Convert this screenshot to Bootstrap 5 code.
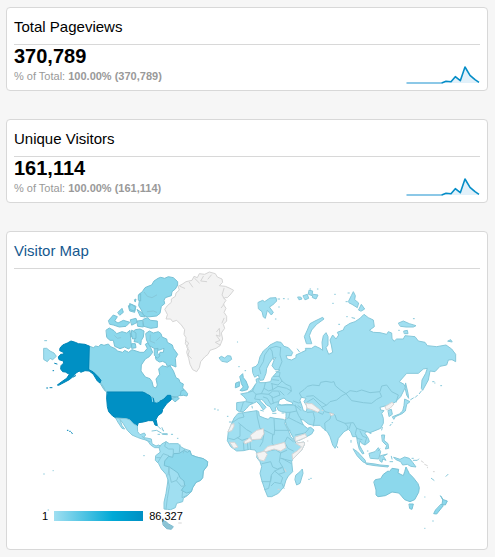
<!DOCTYPE html>
<html lang="en">
<head>
<meta charset="utf-8">
<meta name="viewport" content="width=device-width, initial-scale=1">
<title>Visitor dashboard</title>
<link href="https://cdn.jsdelivr.net/npm/bootstrap@5.3.0/dist/css/bootstrap.min.css" rel="stylesheet">
<style>
  body { background: #f6f6f6; color: #000; font-family: "Liberation Sans", Arial, sans-serif; }
  .board { display: grid; gap: 28px; padding: 7px 7px 7px 6px; }
  .widget { border: 1px solid #d8d8d8; border-radius: 4px; padding: 0 7px 5px; }
  .widget-title { font-size: 15px; line-height: 20px; font-weight: 400; padding: 9px 0 7px; margin: 0; border-bottom: 1px solid #d8d8d8; }
  .widget-title a { color: #15598f; text-decoration: none; }
  .metric { font-size: 20px; line-height: 23px; font-weight: 700; }
  .share { font-size: 11px; line-height: 16px; color: #999; padding-bottom: 1px; }
  .spark { width: 74px; height: 20px; margin-bottom: 1px; }
  .world { display: block; width: 100%; height: auto; }
  .widget-map { padding-bottom: 9px; }
  .legend { left: 28px; bottom: 18px; gap: 6px; font-size: 11px; line-height: 12px; }
  .scale { width: 89px; height: 10px; background: linear-gradient(90deg, #a0dff1, #00a9d6 66%, #0090c4); }
  .world { stroke-width: 3; stroke-linejoin: round; stroke-linecap: round; }
  .low { fill: #a0dff1; stroke: #86c8da; }
  .mid { fill: #8cd8ec; stroke: #78c1d5; }
  .high { fill: #0090c4; stroke: #0085b7; }
  .none { fill: #f3f3f3; stroke: #d5d5d5; }
  .sea { fill: #fff; stroke: #86c8da; }
  .edge { fill: none; stroke: #86c8da; stroke-width: 3; }
</style>
<script src="https://cdn.jsdelivr.net/npm/bootstrap@5.3.0/dist/js/bootstrap.bundle.min.js"></script>
</head>
<body>
<main class="board">
  <section class="card widget">
    <h2 class="widget-title">Total Pageviews</h2>
    <div class="d-flex justify-content-between align-items-end">
      <div>
        <div class="metric">370,789</div>
        <div class="share">% of Total: <b>100.00% (370,789)</b></div>
      </div>
      <svg class="spark" viewBox="0 0 74 20" role="img" aria-label="Pageviews trend">
        <path d="M36 19 40 17.3 45 17.7 49.3 12.7 54.3 16.7 59 3 64 11.3 69 15.7 73 18.3V19Z" fill="#e2f1fa"/>
        <path d="M.5 19H36" fill="none" stroke="#66b6df" stroke-width="1.5"/>
        <path d="M35.7 19 40 17.3 45 17.7 49.3 12.7 54.3 16.7 59 3 64 11.3 69 15.7 73 18.3" fill="none" stroke="#058dc7" stroke-width="1.6" stroke-linejoin="round"/>
      </svg>
    </div>
  </section>

  <section class="card widget">
    <h2 class="widget-title">Unique Visitors</h2>
    <div class="d-flex justify-content-between align-items-end">
      <div>
        <div class="metric">161,114</div>
        <div class="share">% of Total: <b>100.00% (161,114)</b></div>
      </div>
      <svg class="spark" viewBox="0 0 74 20" role="img" aria-label="Visitors trend">
        <path d="M36 19 40 17.3 45 17.7 49.3 12.7 54.3 16.7 59 3 64 11.3 69 15.7 73 18.3V19Z" fill="#e2f1fa"/>
        <path d="M.5 19H36" fill="none" stroke="#66b6df" stroke-width="1.5"/>
        <path d="M35.7 19 40 17.3 45 17.7 49.3 12.7 54.3 16.7 59 3 64 11.3 69 15.7 73 18.3" fill="none" stroke="#058dc7" stroke-width="1.6" stroke-linejoin="round"/>
      </svg>
    </div>
  </section>

  <section class="card widget widget-map">
    <h2 class="widget-title"><a href="#map">Visitor Map</a></h2>
    <div class="position-relative" id="map">
      <svg class="world" viewBox="-48 12 1398 813" role="img" aria-label="Visitors by country">
        <!-- Canada and the Arctic islands -->
        <path class="mid" d="M177 243 190 248 197 243 205 245 213 238 222 241 235 237 242 245 256 251 262 258 278 262 284 256 296 262 306 254 318 258 330 262 342 262 352 250 346 238 356 232 362 248 368 262 358 275 346 282 334 300 333 318 346 336 360 341 366 350 370 366 378 369 382 360 378 342 389 328 386 312 396 302 412 306 420 302 430 317 438 338 447 343 450 352 460 357 458 368 463 378 456 388 440 396 424 394 440 397 436 405 428 402 417 391 400 404 385 411 373 416 370 397 352 388 338 382 232 382 222 374 210 354 208 342 198 330 177 318Z"/>
        <path class="mid" d="M454 378 463 374 473 386 471 393 460 391 452 392ZM426 400 440 396 448 400 436 410ZM348 205 358 198 370 204 385 200 393 206 396 216 410 222 412 232 427 240 430 250 443 268 436 280 438 306 424 300 412 304 408 294 398 289 388 291 378 284 376 276 386 276 390 262 400 262 402 250 386 256 372 250 358 242 350 226Z"/>
        <path class="mid" d="M374 252 384 250 382 264 390 272 382 280 374 272ZM327 88 337 80 345 68 354 64 365 60 372 48 384 40 392 37 404 40 415 35 430 38 443 50 443 60 436 72 426 80 424 92 406 98 402 106 404 116 394 124 390 145 380 153 352 156 340 150 334 135 326 122 328 108Z"/>
        <path class="mid" d="M340 163 352 158 362 166 382 168 382 187 362 190 342 184ZM302 205 316 194 330 192 342 198 340 216 334 226 332 240 324 232 312 230 316 218 306 216ZM229 195 238 189 252 197 260 206 276 200 290 204 300 196 302 220 304 244 296 252 284 246 270 251 254 244 250 226 240 226 231 218Z"/>
        <path class="mid" d="M236 166 250 150 262 155 254 168 264 174 280 166 300 172 288 184 268 186 250 180 240 178ZM264 142 276 130 280 142 270 150ZM296 122 306 118 316 128 314 142 300 138ZM302 164 318 160 322 172 306 180ZM306 196 318 204 318 220 308 222 304 208ZM326 90 332 86 332 108 326 106ZM314 104 318 102 316 110ZM322 134 334 142 346 156 332 154ZM322 168 338 166 340 186 324 184ZM300 116 318 124 314 138 300 134ZM306 236 316 236 318 248 306 250Z"/>
        <path class="edge" d="M343 82 352 94 366 98 380 90M352 140 370 138 380 142M361 210 360 228 374 234M390 216 380 226M254 212 262 220 272 218M204 340 214 356 222 368 226 378"/>
        <!-- Alaska, contiguous states, Hawaii -->
        <path class="high" d="M177 243 165 238 145 236 136 232 123 228 112 234 98 240 90 249 89 257 99 261 102 267 92 268 85 276 87 284 100 288 101 294 93 302 92 312 98 320 106 321 118 328 110 340 98 348 82 360 86 361 105 351 118 344 130 334 138 324 148 318 152 322 165 317 178 318 190 328 202 348 210 354 213 346 205 336 190 321 177 314Z"/>
        <path class="high" d="M50 369h3M60 368h6M69 317h2M74 295l7 2M130 336l7-4M112 496h2M119 499h2M124 503l3 2M232 381 338 381 352 387 362 394 370 400 373 415 385 411 402 402 412 391 422 391 424 404 410 416 398 433 396 443 384 452 378 463 382 482 375 480 370 467 355 467 340 471 325 473 322 483 310 476 300 465 290 461 258 459 248 453 236 440 232 425 230 400Z"/>
        <path d="M350 384 360 388 366 396 368 410M368 386 358 384M388 408 380 412M396 402 388 404" fill="none" stroke="#8cd8ec"/>
        <!-- Greenland -->
        <path class="none" d="M405 132 412 122 424 112 424 102 436 94 438 84 448 75 444 64 456 58 468 50 486 46 492 34 502 38 508 26 524 28 538 21 556 26 562 36 576 42 578 52 568 62 586 64 600 70 611 76 600 90 592 98 580 98 588 106 580 118 588 130 582 142 590 154 590 168 580 178 584 190 574 204 578 222 570 242 558 250 540 256 534 268 524 276 512 290 508 308 500 320 488 314 480 298 476 280 470 262 474 248 466 236 468 218 462 208 464 194 454 180 440 166 428 170 422 162 408 162 412 150Z"/>
        <path class="none" d="M450 64 464 70M478 52 488 66M494 40 508 54M520 34 512 48 530 50M544 30 534 42M582 70 576 90 584 102M582 118 574 128M582 160 576 174M560 200 568 190 570 214 558 210 570 226 556 232 570 240M466 226 476 234 470 246 478 258 474 270 484 280" fill="none"/>
        <path class="low" d="M568 278 574 274 584 279 592 272 602 273 605 283 592 292 576 289Z"/>
        <!-- Mexico, Central America and the Caribbean -->
        <path class="low" d="M258 459 290 461 300 465 310 476 322 483 323 500 330 509 343 504 347 510 340 518 350 519 364 522 366 536 378 543 386 540 394 545 388 548 374 548 362 540 352 526 336 522 322 517 306 510 292 496 280 476 270 463 276 482 284 492 276 490 264 472Z"/>
        <path class="edge" d="M336 514 344 520M348 526 360 530M366 498 380 496 394 504M398 506 412 506 412 509 398 508ZM384 484l8 8M396 488l4 10M424 508h4M442 520h2M384 508h5M341 572h2M41 627h2M69 617h1M54 735h2M553 432h3M563 435h2M398 494l3 3" stroke-width="4"/>
        <!-- South America -->
        <path class="low" d="M388 547 395 537 408 530 418 536 445 536 452 545 464 552 480 557 484 570 500 576 520 581 533 590 532 602 520 618 518 638 512 646 498 652 488 668 484 680 474 690 460 700 458 710 440 715 436 728 422 734 412 733 402 732 402 712 408 685 414 645 408 628 394 612 386 596 376 586 377 572 390 562Z"/>
        <path class="mid" d="M405 587 416 574 428 577 430 566 448 565 462 556 472 562 480 557 484 570 500 576 520 581 533 590 532 602 520 618 518 638 512 646 498 652 488 668 484 680 470 684 454 676 464 662 462 648 450 638 444 624 430 614 418 606 404 602Z"/>
        <path class="edge" d="M408 530 404 544 416 552 430 552 430 566M450 540 448 562M464 552 460 564M380 578 392 578 400 566 416 572M392 578 384 592M416 606 418 626 424 652 440 646 444 636M414 645 418 665 412 700 408 732M440 648 454 664 466 662M458 676 456 698 470 692M418 606 414 630"/>
        <path d="M398 766 408 770 416 777 430 785 424 793 410 791 400 781Z" fill="#8cc4d5" stroke="#7dbbd0"/>
        <path class="none" d="M446 774h8"/>
        <!-- Eurasia -->
        <path class="low" d="M668 322 667 308 678 304 685 295 690 275 700 258 712 248 720 240 740 230 753 232 762 244 775 248 788 262 784 272 768 272 772 282 785 285 798 278 798 270 815 262 828 256 826 250 845 250 855 243 870 250 878 256 876 232 880 212 888 203 894 215 894 240 888 248 896 268 908 262 904 240 900 225 908 210 918 222 926 210 922 202 940 195 944 185 960 175 975 170 990 160 1002 148 1015 158 1030 165 1033 185 1018 196 1030 202 1050 203 1070 208 1075 200 1085 204 1086 220 1092 229 1100 222 1120 222 1125 212 1155 215 1165 228 1185 232 1192 242 1220 245 1248 240 1265 252 1277 268 1277 290 1266 284 1255 285 1250 300 1230 304 1215 320 1200 318 1195 345 1178 376 1174 370 1176 345 1187 325 1192 310 1180 312 1165 325 1130 325 1108 350 1122 358 1126 367 1122 375 1112 395 1095 412 1082 418 1065 423 1050 427 1052 435 1062 437 1055 445 1060 460 1060 475 1052 490 1035 497 1020 503 1010 500 1005 505 1015 520 1018 530 1005 540 995 535 990 527 988 540 995 553 1002 565 998 567 988 553 982 530 980 515 968 515 962 500 955 493 942 500 925 520 920 540 915 550 908 540 900 515 892 500 882 493 870 481 850 481 835 477 820 465 812 463 820 480 832 490 842 487 852 495 845 507 830 515 810 525 795 530 790 518 780 500 770 482 766 468 768 455 768 442 755 440 745 436 740 425 736 428 738 437 728 440 720 425 710 420 700 407 694 403 690 407 705 423 708 427 700 435 690 420 680 410 670 415 658 420 650 430 640 440 628 440 620 435 620 413 645 410 650 405 640 393 632 387 652 383 665 375 675 360 680 353 678 343 686 340 688 353 705 353 722 350 726 338 740 322 750 315 735 314 726 302 733 284 738 278 728 280 718 294 710 310 708 325 700 345 690 346 685 330 675 336Z"/>
        <path class="sea" d="M745 415 748 405 762 399 770 406 788 413 787 419 770 418 755 421ZM815 397 828 400 822 410 832 425 829 440 820 437 815 420 810 407Z"/>
        <path class="low" d="M685 112 698 106 704 110 720 99 738 98 740 108 728 120 718 126 730 142 724 150 712 136 706 160 700 156 696 140 686 132ZM829 235 823 215 832 195 840 176 855 168 878 157 882 162 860 178 845 195 838 212 845 235ZM956 108 964 92 970 80 976 92 974 104 986 114 982 128 966 118 958 114ZM986 134 994 118 1004 132 994 138ZM1106 174 1120 168 1138 176 1158 182 1150 186 1128 186 1112 184ZM1122 198 1132 196 1134 206 1124 206ZM1254 228l8-4 4 6zM42 250 50 250 60 258 72 264 79 274 68 284 60 280 52 290 42 284ZM44 227h6"/>
        <path class="low" d="M804 96h8l4 6-8 2zM820 92l12-4 4 12-10 4zM838 76l10 2-2 14-10-4zM850 88l14 2-6 12-10-4zM744 102h5M760 101h3M746 126h2M736 162h2M714 190h1M840 72h2M862 72h2M908 115h2M914 88h2M948 110h4M954 84h4M926 178h3M950 155h2M966 158l8 2M1150 161h3M1106 196h2M622 231h1M626 305h2M645 317h2M802 252l6 8M774 102h1"/>
        <path class="mid" d="M630 334 638 326 640 338 648 348 655 366 652 374 636 378 630 376 640 366 634 356 632 346ZM618 354 628 350 628 364 617 368Z"/>
        <path class="edge" d="M692 326 688 310 700 290 704 270 718 250 738 244 752 248M730 284 726 258 720 250M752 248 750 270 756 290 746 314M738 320 750 322 748 334 730 334M748 334 756 348 744 360 724 356M728 344 746 346M756 348 768 358 782 364 784 378 774 388M706 353 702 370 716 378 728 374 726 356M675 360 668 378 678 388 694 386 702 370M668 378 656 382M648 410 668 414M640 412 632 438M678 388 674 402 690 404M694 386 716 388 728 378 746 378 750 390 730 398 716 388M700 396 712 400 722 418 736 412 746 410M726 396 730 414M750 378 762 390M728 374 744 364 770 370 784 378M742 420 762 420 790 420 804 428 812 436M796 420 800 438 780 442 768 442M800 438 806 452 814 464M780 442 776 458 800 470 820 480M776 458 768 462M790 408 806 414 812 412M804 422 812 428"/>
        <path class="edge" d="M815 397 808 384 822 374 832 364 848 360 868 362 872 352 888 349 904 352 912 350 916 362 930 374 948 386 960 377 980 380 995 375 1020 383 1050 380 1055 363 1070 360 1085 380 1105 390 1098 412M948 386 965 407 1000 413 1025 415 1040 403 1055 395 1050 383M948 386 936 392 920 405 900 410 890 420 875 427 885 440 905 445 915 450 920 465 945 475 970 473 980 490 995 495 1010 500M830 412 850 400 874 424M832 442 860 440 878 448 882 440M850 483 854 460 850 444M886 496 884 474 900 462 904 446M945 475 954 486 952 494M962 476 958 490M980 490 976 506 982 520M990 498 998 514 1010 518 1004 538M982 520 996 524M830 394 850 392 870 408 888 420M796 510 825 504 836 492"/>
        <path class="none" d="M828 414 836 416 846 416 856 424 870 435 864 442 846 434 832 430ZM796 516 826 506 830 516 796 530ZM1066 424 1086 412 1092 417 1080 430 1070 434ZM900 444l12 4-8 4zM876 436h3M766 460h2"/>
        <!-- Africa -->
        <path class="low" d="M625 445 640 443 680 437 686 440 688 453 705 460 715 463 720 457 735 460 760 463 767 467 764 475 775 497 782 515 795 530 798 535 822 531 824 537 815 555 800 570 788 583 785 590 788 620 775 633 768 645 762 665 745 685 725 695 713 695 705 675 695 645 690 625 695 605 690 590 680 577 682 565 675 555 658 553 640 557 620 558 602 545 592 527 595 500 605 475 612 460ZM798 630 810 620 817 612 819 625 810 655 800 660 795 645Z"/>
        <path class="edge" d="M608 472 626 460 642 456 638 444M626 474 650 494 664 502M680 438 682 456 690 490 700 494 702 506M732 461 734 496 780 496M734 496 732 510 700 494M728 510 726 534 732 542M702 506 698 530 690 544M596 520 612 524 630 514 630 480M622 518 636 526 654 520 662 526M640 532 642 556M652 530 654 554M660 528 662 552M665 525 696 522M732 542 764 532 772 516 790 530M764 532 774 550 790 558M708 560 736 554 752 564 748 590 758 606 742 612 728 606 722 590 696 596M752 564 770 556M756 580 784 596M758 606 764 622 746 628 734 618 724 630 722 650 696 650M746 628 758 638 752 656 734 652 724 662M724 634 716 670 704 674M734 618 756 608M752 580 784 588M680 565 700 560M756 656 762 670"/>
        <path class="none" d="M594 500 604 478 612 476 612 484 606 496ZM662 510 680 496 700 491 702 506 692 522 666 524ZM642 530 660 518 666 528 646 536ZM600 532 614 532 624 546 612 550ZM702 556 714 544 734 540 764 532 768 548 752 558 732 552 708 560ZM680 565 704 558 712 568 702 588 688 584ZM798 535 822 531 824 537 815 555 788 583 786 568 804 556 814 546ZM764 612l4 8M744 673h4M832 528h2"/>
        <path class="edge" d="M592 454h2M598 471h6M836 643h2M842 640h2M664 414h3M666 424l1 5M692 436l8 2M728 445h10M756 444h6" stroke-width="4"/>
        <!-- South-east Asia, Japan -->
        <path class="low" d="M970 552 982 560 1005 585 1008 595 998 590 982 573ZM1010 594 1035 597 1050 600 1076 602 1074 606 1035 602 1010 598ZM1018 565 1035 560 1045 548 1052 560 1046 582 1022 580ZM1052 572 1072 567 1060 574 1068 586 1058 582 1056 592 1050 588ZM1092 577 1110 583 1124 576 1138 580 1148 592 1158 606 1142 604 1132 598 1118 600 1112 590 1098 584ZM1056 510 1064 510 1062 526 1074 536 1076 550 1066 552 1070 542 1058 530ZM1075 436 1084 433 1087 448 1078 454ZM1088 455 1108 447 1118 438 1122 422 1124 402 1140 410 1130 418 1126 438 1116 446 1096 455 1092 462ZM1127 355 1134 385 1136 400 1130 390 1126 372Z"/>
        <path class="edge" d="M1057 487l-2 8M1020 505h3M921 544l2 4M963 526v6M1142 404l8-5M1156 397l6-6M1174 378l-6 8M1080 482l3-4M1086 473h2M1208 350h4M1214 354h1M1232 362h3M1084 574l2 8M1080 590h8M1150 586h12l4-4M1146 580h4M1044 558l6-6M1204 640l8 6M1248 634l6-6M1208 768h2M1184 790h1M1012 558h2M1184 696h1" stroke-width="4"/>
        <path class="none" d="M1174 588l6 4M1184 598l8 4M1192 608h1M1210 620h3"/>
        <!-- Australia, New Zealand -->
        <path class="mid" d="M1032 650 1036 644 1052 641 1060 628 1074 618 1078 620 1086 610 1106 613 1104 624 1120 632 1124 620 1128 606 1132 614 1138 626 1150 638 1164 656 1168 668 1166 682 1154 704 1140 710 1124 704 1116 695 1112 690 1106 684 1086 681 1066 692 1044 695 1038 690 1038 676ZM1138 717 1150 717 1146 733 1140 731ZM1232 693 1240 704 1252 708 1246 720 1236 718 1238 706ZM1234 718 1240 722 1220 747 1211 746 1216 736Z"/>
      </svg>
      <div class="legend position-absolute d-flex align-items-center">
        <span>1</span><span class="scale"></span><span>86,327</span>
      </div>
    </div>
  </section>
</main>
</body>
</html>
